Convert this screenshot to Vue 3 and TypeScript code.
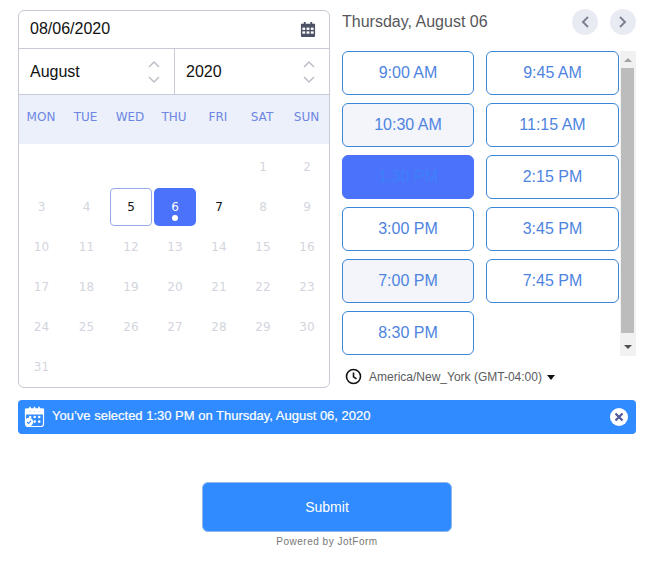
<template>
  <div class="page">
    <div class="picker">
      <div class="calendar">
        <div class="date-row">
          <span>08/06/2020</span>
          <svg width="16" height="16" viewBox="0 0 17 17">
            <path fill="#4c5265" d="M1 3h3V1h2v2h5V1h2v2h3v13a1 1 0 0 1-1 1H2a1 1 0 0 1-1-1z" />
            <g fill="#fff">
              <rect x="2.5" y="7" width="3" height="2.5" />
              <rect x="7" y="7" width="3" height="2.5" />
              <rect x="11.5" y="7" width="3" height="2.5" />
              <rect x="2.5" y="11" width="3" height="2.5" />
              <rect x="7" y="11" width="3" height="2.5" />
              <rect x="11.5" y="11" width="3" height="2.5" />
            </g>
          </svg>
        </div>
        <div class="select-row">
          <div v-for="item in selects" :key="item" class="select">
            <span>{{ item }}</span>
            <svg width="14" height="26" viewBox="0 0 14 26" fill="none" stroke="#bcbfc7" stroke-width="1.5">
              <path d="M2 8l5-5 5 5" />
              <path d="M2 18l5 5 5-5" />
            </svg>
          </div>
        </div>
        <div class="weekdays">
          <span v-for="day in weekdays" :key="day">{{ day }}</span>
        </div>
        <div class="days">
          <span v-for="n in 5" :key="'blank' + n"></span>
          <span
            v-for="n in 31"
            :key="n"
            class="day"
            :class="{ hover: n === 5, active: n === 6, open: n === 5 || n === 7 }"
          >{{ n }}</span>
        </div>
      </div>

      <div class="times">
        <div class="times-head">
          <span class="title">Thursday, August 06</span>
          <div class="nav">
            <button class="nav-btn">
              <svg width="10" height="14" viewBox="0 0 10 14" fill="none" stroke="#7d8191" stroke-width="2"><path d="M8 2L3 7l5 5" /></svg>
            </button>
            <button class="nav-btn">
              <svg width="10" height="14" viewBox="0 0 10 14" fill="none" stroke="#7d8191" stroke-width="2"><path d="M2 2l5 5-5 5" /></svg>
            </button>
          </div>
        </div>
        <div class="slots-wrap">
          <div class="slots">
            <button
              v-for="slot in slots"
              :key="slot"
              class="slot"
              :class="{ tinted: slot === '10:30 AM' || slot === '7:00 PM', chosen: slot === '1:30 PM' }"
            >{{ slot }}</button>
          </div>
          <div class="scrollbar">
            <i class="arrow up"></i>
            <div class="thumb"></div>
            <i class="arrow down"></i>
          </div>
        </div>
        <div class="timezone">
          <svg width="17" height="17" viewBox="0 0 17 17" fill="none" stroke="#111" stroke-width="1.6">
            <circle cx="8.5" cy="8.5" r="7" />
            <path d="M8.5 4.5v4.3l3 2" />
          </svg>
          <span>America/New_York (GMT-04:00)</span>
          <i class="caret"></i>
        </div>
      </div>
    </div>

    <div class="banner">
      <svg width="21" height="22" viewBox="0 0 21 22" fill="none" stroke="#fff" stroke-width="1.2">
        <rect x="1.5" y="3" width="18" height="17.5" rx="2.5" />
        <path fill="#fff" d="M1.5 3h18v5h-18z" />
        <path d="M6 .8v3.4M10.5 .8v3.4M15 .8v3.4" stroke="#fff" stroke-width="1.6" />
        <path d="M6 5.6v.1M10.5 5.6v.1M15 5.6v.1" stroke="#2f8bff" stroke-width="1.4" />
        <g fill="#fff" stroke="none">
          <circle cx="6.2" cy="11" r="1.3" />
          <circle cx="10.7" cy="11" r="1.3" />
          <circle cx="15.2" cy="11" r="1.3" />
          <circle cx="10.7" cy="15.6" r="1.3" />
          <circle cx="15.2" cy="15.6" r="1.3" />
          <circle cx="5" cy="16" r="4.2" />
        </g>
        <path d="M3.1 16l1.5 1.5 2.4-2.8" stroke="#2f8bff" stroke-width="1.1" />
      </svg>
      <span class="banner-text">You’ve selected 1:30 PM on Thursday, August 06, 2020</span>
      <button class="close">
        <svg width="10" height="10" viewBox="0 0 10 10" stroke="#4f5a9c" stroke-width="2.2"><path d="M1.5 1.5l7 7M8.5 1.5l-7 7" /></svg>
      </button>
    </div>

    <button class="submit">Submit</button>
    <div class="powered">Powered by JotForm</div>
  </div>
</template>

<script setup lang="ts">
const selects: string[] = ['August', '2020']
const weekdays: string[] = ['MON', 'TUE', 'WED', 'THU', 'FRI', 'SAT', 'SUN']
const slots: string[] = [
  '9:00 AM', '9:45 AM', '10:30 AM', '11:15 AM', '1:30 PM',
  '2:15 PM', '3:00 PM', '3:45 PM', '7:00 PM', '7:45 PM', '8:30 PM'
]
</script>

<style scoped>
.page {
  width: 663px;
  height: 568px;
  box-sizing: border-box;
  padding: 10px 27px 0 18px;
  font-family: "Liberation Sans", Arial, sans-serif;
  background: #fff;
  overflow: hidden;
}

.picker {
  display: flex;
  gap: 12px;
}

.calendar {
  width: 312px;
  height: 378px;
  box-sizing: border-box;
  border: 1px solid #c8cbd6;
  border-radius: 6px;
  overflow: hidden;
  flex-shrink: 0;
}

.date-row {
  height: 35px;
  display: flex;
  align-items: center;
  justify-content: space-between;
  padding: 0 13px 2px 11px;
  font-size: 16px;
  color: #111;
  border-bottom: 1px solid #c8cbd6;
}

.select-row {
  height: 45px;
  display: grid;
  grid-template-columns: 155px 155px;
  border-bottom: 1px solid #c8cbd6;
}

.select {
  display: flex;
  align-items: center;
  justify-content: space-between;
  padding: 1px 13px 0 11px;
  font-size: 16px;
  color: #111;
}

.select + .select {
  border-left: 1px solid #c8cbd6;
}

.weekdays {
  height: 49px;
  display: grid;
  grid-template-columns: 44px 45px 44px 44px 44px 44px 45px;
  background: #ebf0fb;
  font-size: 12px;
  font-family: "DejaVu Sans", Verdana, sans-serif;
  color: #6e86e3;
  text-align: center;
  line-height: 45px;
}

.days {
  display: grid;
  grid-template-columns: 45px 45px repeat(5, 44px);
  grid-auto-rows: 40px;
  padding-top: 3px;
}

.day {
  display: flex;
  align-items: center;
  justify-content: center;
  font-family: "DejaVu Sans", Verdana, sans-serif;
  font-size: 12px;
  color: #d3d5de;
  margin: 0 1px;
  height: 38px;
  align-self: center;
  box-sizing: border-box;
  position: relative;
}

.day.open {
  color: #111;
}

.day.hover {
  border: 1px solid #98aae6;
  border-radius: 4px;
}

.day.active {
  background: #4a72fb;
  color: #fff;
  border-radius: 5px;
}

.day.active::after {
  content: "";
  position: absolute;
  left: 50%;
  bottom: 5px;
  width: 6px;
  height: 6px;
  margin-left: -3px;
  border-radius: 50%;
  background: #fff;
}

.times {
  flex: 1;
  min-width: 0;
}

.times-head {
  height: 24px;
  display: flex;
  align-items: center;
  justify-content: space-between;
  margin-bottom: 17px;
}

.title {
  font-size: 16px;
  color: #57575b;
}

.nav {
  display: flex;
  gap: 12px;
}

.nav-btn {
  width: 26px;
  height: 26px;
  border: 0;
  padding: 0;
  border-radius: 50%;
  background: #e9ebf3;
  display: flex;
  align-items: center;
  justify-content: center;
}

.slots-wrap {
  display: flex;
  height: 305px;
}

.slots {
  width: 277px;
  display: grid;
  grid-template-columns: 132px 133px;
  grid-auto-rows: 44px;
  gap: 8px 12px;
  align-content: start;
  flex-shrink: 0;
}

.slot {
  border: 1px solid #3d86d8;
  border-radius: 6px;
  background: #fff;
  color: #4e84e0;
  font-family: inherit;
  font-size: 16px;
  padding: 0;
}

.slot.tinted {
  background: #f3f5fa;
}

.slot.chosen {
  background: #4a72fb;
  border-color: #4a72fb;
  color: #3f80f8;
}

.scrollbar {
  width: 16px;
  margin-left: 1px;
  background: #f1f1f1;
  display: flex;
  flex-direction: column;
  align-items: center;
}

.arrow {
  display: block;
  width: 0;
  height: 0;
  border-left: 4px solid transparent;
  border-right: 4px solid transparent;
}

.arrow.up {
  border-bottom: 4px solid #a3a3a3;
  margin: 7px 0 6px;
}

.arrow.down {
  border-top: 4px solid #505050;
  margin: auto 0 7px;
}

.thumb {
  width: 13px;
  height: 265px;
  background: #bcbcbc;
  align-self: flex-start;
  margin-left: 1px;
}

.timezone {
  display: flex;
  align-items: center;
  height: 17px;
  margin-top: 12px;
  padding-left: 3px;
  font-size: 12px;
  color: #5c5c60;
}

.timezone span {
  margin-left: 7px;
}

.caret {
  width: 0;
  height: 0;
  margin-left: 5px;
  margin-top: 1px;
  border-left: 4px solid transparent;
  border-right: 4px solid transparent;
  border-top: 5px solid #111;
}

.banner {
  height: 34px;
  width: 618px;
  margin-top: 12px;
  box-sizing: border-box;
  padding: 0 8px 0 6px;
  background: #2f8bff;
  border-radius: 4px;
  display: flex;
  align-items: center;
  color: #fff;
}

.banner-text {
  flex: 1;
  margin-left: 7px;
  font-size: 13px;
  margin-top: -4px;
  -webkit-text-stroke: 0.2px #fff;
}

.close {
  width: 18px;
  height: 18px;
  padding: 0;
  border: 0;
  border-radius: 50%;
  background: #fff;
  display: flex;
  align-items: center;
  justify-content: center;
}

.submit {
  display: block;
  width: 250px;
  height: 50px;
  margin: 48px 0 0 184px;
  border: 1px solid #8fb9ee;
  border-radius: 6px;
  background: #2f8bff;
  color: #fff;
  font-family: inherit;
  font-size: 14px;
  padding: 0;
}

.powered {
  width: 250px;
  margin: 4px 0 0 184px;
  text-align: center;
  font-size: 10px;
  letter-spacing: 0.5px;
  color: #777;
  line-height: 12px;
}
</style>
